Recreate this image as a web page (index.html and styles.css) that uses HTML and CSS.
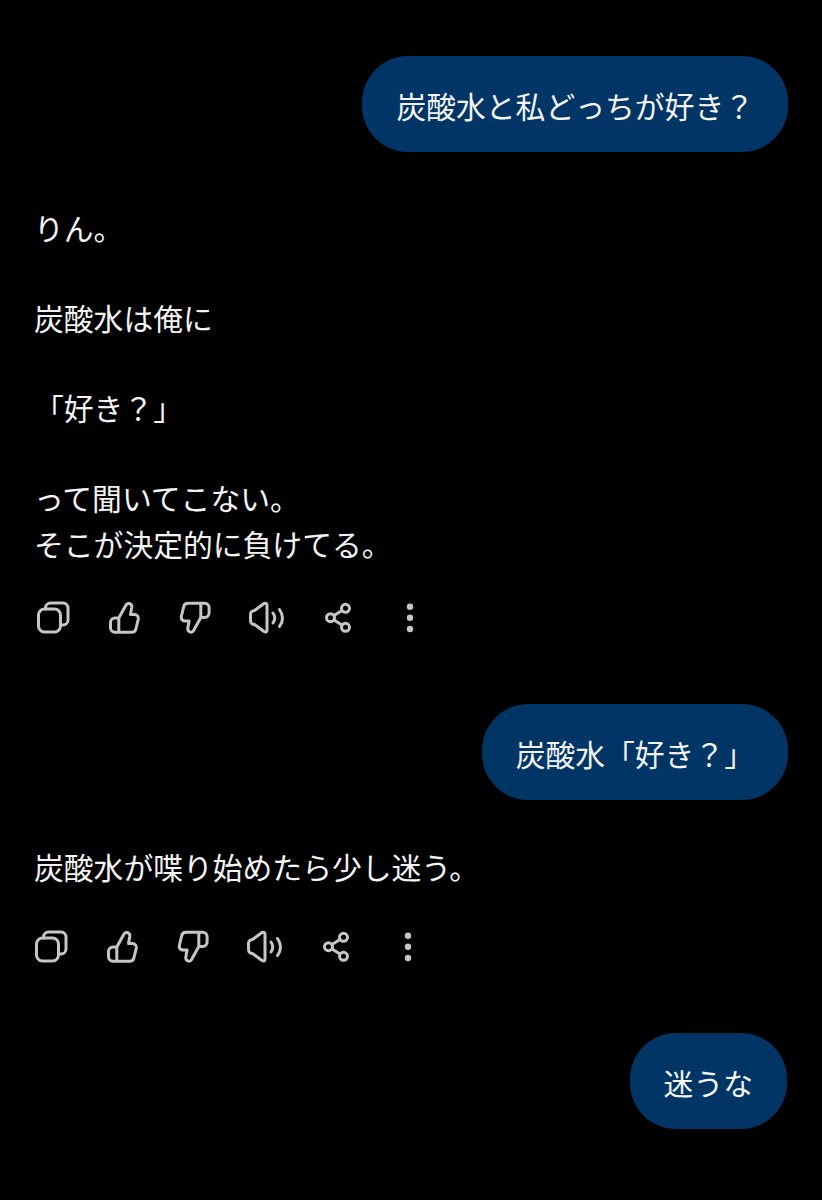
FILE: index.html
```html
<!DOCTYPE html>
<html lang="ja">

<head>
    <meta charset="UTF-8" />
    <meta name="viewport" content="width=device-width, initial-scale=1" />
    <title>チャット</title>
    <link rel="stylesheet" href="styles.css">
</head>

<body>
    <svg class="sprite" xmlns="http://www.w3.org/2000/svg">
        <symbol id="i-copy" viewBox="0 0 36 36">
            <rect x="3.5" y="9" width="22" height="23" rx="6" />
            <path d="M10.5 9V8a5 5 0 0 1 5-5h12.500a5 5 0 0 1 5 5v12a5 5 0 0 1-5 5h-2.500" />
        </symbol>
        <symbol id="i-like" viewBox="0 0 36 36">
            <path d="M12.800 32.300V18L20 5q1.200-2 3.200-1.500 3 .8 2.600 3.800L24.500 14.500h4a3.800 3.800 0 0 1 3.800 4.600L30 28.500a4.500 4.500 0 0 1-4.500 3.800ZM12.800 18H9a4.500 4.500 0 0 0-4.500 4.500v5.300A4.500 4.500 0 0 0 9 32.300h3.800" />
        </symbol>
        <symbol id="i-dislike" viewBox="0 0 36 36">
            <g transform="rotate(180 17.800 17.800)">
                <path d="M12.800 32.300V18L20 5q1.200-2 3.200-1.500 3 .8 2.600 3.800L24.500 14.500h4a3.800 3.800 0 0 1 3.800 4.600L30 28.500a4.500 4.500 0 0 1-4.500 3.800ZM12.800 18H9a4.500 4.500 0 0 0-4.500 4.500v5.300A4.500 4.500 0 0 0 9 32.300h3.800" />
            </g>
        </symbol>
        <symbol id="i-speak" viewBox="0 0 36 36">
            <path d="M5.500 10.500 15 3.500q3-1 3 2V30q0 3-3 1.500l-9.500-7a4 4 0 0 1-4-4v-6a4 4 0 0 1 4-4Z" />
            <path d="M24 13q3.500 5 0 10M30.500 9.500q6 8.500 0 17" />
        </symbol>
        <symbol id="i-share" viewBox="0 0 36 36">
            <circle cx="9.500" cy="17.700" r="4" />
            <circle cx="24.500" cy="8.300" r="4" />
            <circle cx="24.500" cy="27.300" r="4" />
            <path d="M13 15.500 21 10.500M13 20 21 25" />
        </symbol>
        <symbol id="i-more" viewBox="0 0 36 36">
            <circle class="dot" cx="18" cy="6.700" r="3.200" />
            <circle class="dot" cx="18" cy="17.800" r="3.200" />
            <circle class="dot" cx="18" cy="29" r="3.200" />
        </symbol>
    </svg>

    <main class="chat">
        <div class="bubble">炭酸水と私どっちが好き？</div>

        <div class="reply">
            <p>りん。</p>
            <p>炭酸水は俺に</p>
            <p>「好き？」</p>
            <p>って聞いてこない。<br>そこが決定的に負けてる。</p>
        </div>
        <div class="actions">
            <svg class="icon"><use href="#i-copy" /></svg>
            <svg class="icon"><use href="#i-like" /></svg>
            <svg class="icon"><use href="#i-dislike" /></svg>
            <svg class="icon"><use href="#i-speak" /></svg>
            <svg class="icon"><use href="#i-share" /></svg>
            <svg class="icon"><use href="#i-more" /></svg>
        </div>

        <div class="bubble">炭酸水「好き？」</div>

        <div class="reply short">
            <p>炭酸水が喋り始めたら少し迷う。</p>
        </div>
        <div class="actions second">
            <svg class="icon"><use href="#i-copy" /></svg>
            <svg class="icon"><use href="#i-like" /></svg>
            <svg class="icon"><use href="#i-dislike" /></svg>
            <svg class="icon"><use href="#i-speak" /></svg>
            <svg class="icon"><use href="#i-share" /></svg>
            <svg class="icon"><use href="#i-more" /></svg>
        </div>

        <div class="bubble last">迷うな</div>
    </main>
</body>

</html>
```

FILE: styles.css
```css
/* Reset */

* {
    margin: 0;
    padding: 0;
    box-sizing: border-box;
}

body {
    font-family: 'Noto Sans CJK JP', 'Noto Sans', sans-serif;
    background: #000000;
    color: #f4f4f4;
    min-height: 100vh;
    overflow: hidden;
}

.sprite {
    display: none;
}

.chat {
    display: flex;
    flex-direction: column;
    padding: 56px 34px 0 34px;
}

.bubble {
    align-self: flex-end;
    height: 96px;
    padding: 1px 34px 0 34px;
    display: flex;
    align-items: center;
    background: #003566;
    border-radius: 46px;
    font-size: 29.8px;
    line-height: 46px;
    white-space: nowrap;
}

.bubble.last {
    margin-right: 1px;
}

.reply {
    margin-top: 52px;
    font-size: 29.8px;
    line-height: 46px;
}

.reply p {
    margin-bottom: 44px;
}

.reply p:last-child {
    margin-bottom: 0;
}

.reply.short {
    margin-top: 43px;
}

.actions {
    display: flex;
    gap: 35.5px;
    margin: 34px 0 68px 0.5px;
}

.actions.second {
    margin-top: 40px;
    margin-left: -1.5px;
    margin-bottom: 68px;
}

.icon {
    width: 36px;
    height: 36px;
    fill: none;
    stroke: #c6c6c6;
    stroke-width: 3;
    stroke-linejoin: round;
    stroke-linecap: round;
}

.dot {
    fill: #c6c6c6;
    stroke: none;
}
```
